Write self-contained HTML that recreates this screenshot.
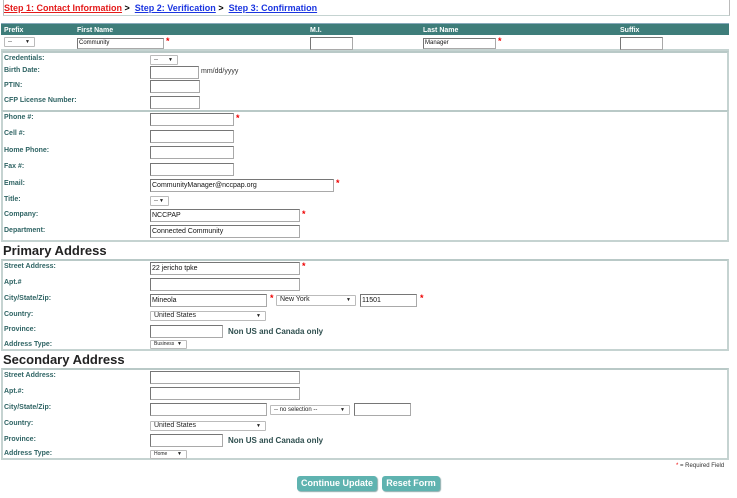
<!DOCTYPE html>
<html><head><meta charset="utf-8"><style>
*{margin:0;padding:0;box-sizing:border-box}
body{width:737px;height:498px;background:#fff;position:relative;overflow:hidden;font-family:"Liberation Sans",Arial,sans-serif}
.a{position:absolute}
.l{position:absolute;left:4px;font-size:7px;font-weight:bold;color:#2f6464}
.i{position:absolute;height:13px;border:1px solid #a9a9a9;border-top-color:#767676;border-left-color:#767676;background:#fff;font-size:7px;padding-left:1px;line-height:11px;color:#111}
.s{position:absolute;height:10px;border:1px solid #bbb;background:#fff;font-size:6px;line-height:8px;padding-left:3px;color:#222;border-radius:1px}
.s:after{content:"▼";position:absolute;right:4px;top:0;font-size:5px}
.st{position:absolute;color:#e00;font-size:9px;font-weight:bold}
.box{position:absolute;left:1px;width:728px;border:2px solid #c5d3d1;border-top-color:#b9c9c7}
.h{position:absolute;left:3px;font-size:13px;font-weight:bold;color:#222}
.hd{position:absolute;top:27px;font-size:7px;font-weight:bold;color:#fff}
.b{position:absolute;top:476px;height:15px;background:#5fb3b0;border-radius:3px;color:#fff;font-size:9px;font-weight:bold;text-align:center;line-height:15px;box-shadow:1px 1px 1px #8aa}
</style></head><body>
<div class="a" style="left:3px;top:0;width:727px;height:16px;border-left:1px solid #bbb;border-right:1px solid #bbb;border-bottom:1px solid #c5d3d1"></div>
<div class="a" style="left:4px;top:3px;font-size:9px;font-weight:bold;white-space:nowrap"><span style="color:#e41b1b;text-decoration:underline">Step 1: Contact Information</span> &gt; &nbsp;<span style="color:#1a35e0;text-decoration:underline">Step 2: Verification</span> &gt; &nbsp;<span style="color:#1a35e0;text-decoration:underline">Step 3: Confirmation</span></div>
<div class="a" style="left:1px;top:23px;width:728px;height:12px;background:#3e7d7a;border-top:1px solid #8ab"></div>
<div class="hd" style="left:4px">Prefix</div><div class="hd" style="left:77px">First Name</div><div class="hd" style="left:310px">M.I.</div><div class="hd" style="left:423px">Last Name</div><div class="hd" style="left:620px">Suffix</div>
<div class="a" style="left:1px;top:35px;width:728px;height:16px;border-bottom:2px solid #c5d3d1"></div>
<div class="s" style="left:4px;top:37px;width:31px">--</div>
<div class="i" style="left:77px;top:38px;width:87px;height:11px;font-size:6px;line-height:9px">Community</div><div class="st" style="left:166px;top:36px">*</div>
<div class="i" style="left:310px;top:37px;width:43px"></div>
<div class="i" style="left:423px;top:38px;width:73px;height:11px;font-size:6px;line-height:9px">Manager</div><div class="st" style="left:498px;top:36px">*</div>
<div class="i" style="left:620px;top:37px;width:43px"></div>
<div class="box" style="top:51px;height:60px;border-bottom:none"></div>
<div class="l" style="top:55px">Credentials:</div><div class="s" style="left:150px;top:55px;width:28px">--</div>
<div class="l" style="top:67px">Birth Date:</div><div class="i" style="left:150px;top:66px;width:49px"></div><div class="a" style="left:201px;top:68px;font-size:7px;color:#333">mm/dd/yyyy</div>
<div class="l" style="top:82px">PTIN:</div><div class="i" style="left:150px;top:80px;width:50px"></div>
<div class="l" style="top:97px">CFP License Number:</div><div class="i" style="left:150px;top:96px;width:50px"></div>
<div class="box" style="top:110px;height:132px"></div>
<div class="l" style="top:114px">Phone #:</div><div class="i" style="left:150px;top:113px;width:84px"></div><div class="st" style="left:236px;top:113px">*</div>
<div class="l" style="top:130px">Cell #:</div><div class="i" style="left:150px;top:130px;width:84px"></div>
<div class="l" style="top:147px">Home Phone:</div><div class="i" style="left:150px;top:146px;width:84px"></div>
<div class="l" style="top:163px">Fax #:</div><div class="i" style="left:150px;top:163px;width:84px"></div>
<div class="l" style="top:180px">Email:</div><div class="i" style="left:150px;top:179px;width:184px">CommunityManager@nccpap.org</div><div class="st" style="left:336px;top:178px">*</div>
<div class="l" style="top:196px">Title:</div><div class="s" style="left:150px;top:196px;width:19px">--</div>
<div class="l" style="top:211px">Company:</div><div class="i" style="left:150px;top:209px;width:150px">NCCPAP</div><div class="st" style="left:302px;top:209px">*</div>
<div class="l" style="top:227px">Department:</div><div class="i" style="left:150px;top:225px;width:150px">Connected Community</div>
<div class="h" style="top:243px">Primary Address</div>
<div class="box" style="top:259px;height:92px"></div>
<div class="l" style="top:263px">Street Address:</div><div class="i" style="left:150px;top:262px;width:150px">22 jericho tpke</div><div class="st" style="left:302px;top:261px">*</div>
<div class="l" style="top:279px">Apt.#</div><div class="i" style="left:150px;top:278px;width:150px"></div>
<div class="l" style="top:295px">City/State/Zip:</div><div class="i" style="left:150px;top:294px;width:117px">Mineola</div><div class="st" style="left:270px;top:293px">*</div>
<div class="s" style="left:276px;top:295px;width:80px;height:11px;font-size:7px">New York</div>
<div class="i" style="left:360px;top:294px;width:57px">11501</div><div class="st" style="left:420px;top:293px">*</div>
<div class="l" style="top:311px">Country:</div><div class="s" style="left:150px;top:311px;width:116px;font-size:7px">United States</div>
<div class="l" style="top:326px">Province:</div><div class="i" style="left:150px;top:325px;width:73px"></div><div class="a" style="left:228px;top:327px;font-size:8px;font-weight:bold;color:#2f4f4f">Non US and Canada only</div>
<div class="l" style="top:341px">Address Type:</div><div class="s" style="left:150px;top:340px;width:37px;height:9px;font-size:5px;line-height:7px">Business</div>
<div class="h" style="top:352px">Secondary Address</div>
<div class="box" style="top:368px;height:92px"></div>
<div class="l" style="top:372px">Street Address:</div><div class="i" style="left:150px;top:371px;width:150px"></div>
<div class="l" style="top:388px">Apt.#:</div><div class="i" style="left:150px;top:387px;width:150px"></div>
<div class="l" style="top:404px">City/State/Zip:</div><div class="i" style="left:150px;top:403px;width:117px"></div>
<div class="s" style="left:270px;top:405px;width:80px;height:10px;font-size:6px">-- no selection --</div>
<div class="i" style="left:354px;top:403px;width:57px"></div>
<div class="l" style="top:420px">Country:</div><div class="s" style="left:150px;top:421px;width:116px;font-size:7px">United States</div>
<div class="l" style="top:436px">Province:</div><div class="i" style="left:150px;top:434px;width:73px"></div><div class="a" style="left:228px;top:436px;font-size:8px;font-weight:bold;color:#2f4f4f">Non US and Canada only</div>
<div class="l" style="top:450px">Address Type:</div><div class="s" style="left:150px;top:450px;width:37px;height:9px;font-size:5px;line-height:7px">Home</div>
<div class="a" style="left:676px;top:463px;font-size:6px;color:#333"><span style="color:#e00">*</span> = Required Field</div>
<div class="b" style="left:297px;width:80px">Continue Update</div>
<div class="b" style="left:382px;width:58px">Reset Form</div>
</body></html>
